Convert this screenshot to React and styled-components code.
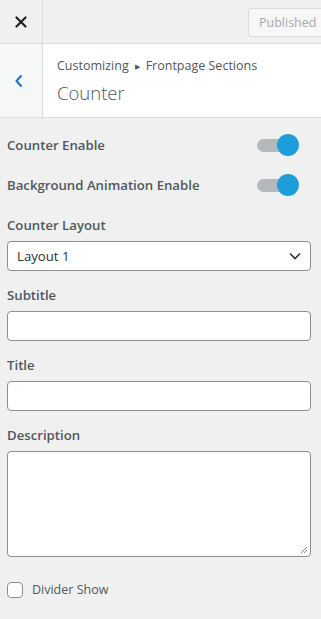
import React from 'react'
import styled, { createGlobalStyle } from 'styled-components'

const GlobalStyle = createGlobalStyle`
  html, body {
    margin: 0;
    padding: 0;
    background: #f0f0f1;
  }
  body {
    font-family: "Open Sans", "Noto Sans", sans-serif;
    color: #50575e;
  }
  * { box-sizing: border-box; }
`

const Panel = styled.div`
  width: 321px;
  height: 619px;
  background: #f0f0f1;
  overflow: hidden;
`

const TopBar = styled.div`
  display: flex;
  align-items: center;
  height: 44px;
  border-bottom: 1px solid #dcdcde;
  background: #f0f0f1;
`

const CloseButton = styled.div`
  width: 43px;
  height: 43px;
  display: flex;
  align-items: center;
  justify-content: center;
  border-right: 1px solid #dcdcde;
  svg { width: 12px; height: 12px; }
`

const PublishButton = styled.div`
  margin-left: auto;
  margin-right: -7px;
  margin-top: 1px;
  width: 80px;
  height: 29px;
  padding: 0 0 0 10px;
  display: flex;
  align-items: center;
  border: 1px solid #dcdcde;
  border-radius: 3px;
  background: #f6f7f7;
  color: #a7aaad;
  font-size: 12.5px;
`

const SectionHeader = styled.div`
  display: flex;
  height: 74px;
  background: #fff;
  border-bottom: 1px solid #dcdcde;
`

const BackButton = styled.div`
  width: 43px;
  display: flex;
  align-items: center;
  justify-content: center;
  padding-right: 4px;
  background: #f6f7f7;
  border-right: 1px solid #dcdcde;
  svg { width: 10px; height: 14px; }
`

const HeaderText = styled.div`
  padding: 12px 0 0 14px;
  display: flex;
  flex-direction: column;
`

const Crumb = styled.div`
  font-size: 12.5px;
  line-height: 20px;
  color: #50575e;
  span {
    font-size: 7px;
    margin: 0 6px;
    position: relative;
    top: -1px;
  }
`

const SectionTitle = styled.div`
  font-size: 18.5px;
  font-weight: 300;
  line-height: 28px;
  margin-top: 1px;
  color: #50575e;
`

const Body = styled.div`
  padding: 12px 10px 0 7px;
  display: flex;
  flex-direction: column;
`

const ToggleRow = styled.div`
  display: flex;
  align-items: center;
  justify-content: space-between;
  height: 40px;
  padding-right: 12px;
  margin-top: ${p => p.$first ? '-5px' : '0'};
`

const Label = styled.div`
  font-size: 13.2px;
  font-weight: 600;
  color: #50575e;
  line-height: 20px;
`

const Toggle = styled.div`
  position: relative;
  width: 42px;
  height: 22px;
  display: flex;
  align-items: center;
  &::before {
    content: '';
    width: 34px;
    height: 13px;
    border-radius: 7px;
    background: #b4b9be;
  }
  &::after {
    content: '';
    position: absolute;
    right: 0;
    top: 0;
    width: 22px;
    height: 22px;
    border-radius: 50%;
    background: #1e9fdb;
  }
`

const Field = styled.div`
  display: flex;
  flex-direction: column;
  margin-top: ${p => p.$mt || '14px'};
`

const FieldLabel = styled(Label)`
  margin-bottom: 6px;
`

const Select = styled.div`
  height: 30px;
  background: #fff;
  border: 1px solid #8c8f94;
  border-radius: 4px;
  display: flex;
  align-items: center;
  padding: 0 9px;
  font-size: 13.2px;
  color: #2c3338;
  svg { margin-left: auto; width: 12px; height: 8px; }
`

const TextInput = styled.div`
  height: 30px;
  background: #fff;
  border: 1px solid #8c8f94;
  border-radius: 4px;
`

const TextArea = styled.div`
  position: relative;
  height: 106px;
  background: #fff;
  border: 1px solid #8c8f94;
  border-radius: 4px;
  svg {
    position: absolute;
    right: 2px;
    bottom: 2px;
  }
`

const CheckRow = styled.div`
  display: flex;
  align-items: center;
  margin-top: 24px;
  gap: 9px;
`

const CheckBox = styled.div`
  width: 16px;
  height: 16px;
  border: 1px solid #8c8f94;
  border-radius: 4px;
  background: #fff;
`

const CheckLabel = styled.div`
  font-size: 12.5px;
  color: #50575e;
`

export default function App() {
  return (
    <Panel>
      <GlobalStyle />
      <TopBar>
        <CloseButton>
          <svg viewBox="0 0 12 12">
            <path d="M1.5 1.5 L10.5 10.5 M10.5 1.5 L1.5 10.5" stroke="#1d2327" strokeWidth="2.2" strokeLinecap="round" />
          </svg>
        </CloseButton>
        <PublishButton>Published</PublishButton>
      </TopBar>
      <SectionHeader>
        <BackButton>
          <svg viewBox="0 0 10 14">
            <path d="M7.5 1.5 L2.5 7 L7.5 12.5" fill="none" stroke="#2271b1" strokeWidth="2" />
          </svg>
        </BackButton>
        <HeaderText>
          <Crumb>Customizing<span>▶</span>Frontpage Sections</Crumb>
          <SectionTitle>Counter</SectionTitle>
        </HeaderText>
      </SectionHeader>
      <Body>
        <ToggleRow $first>
          <Label>Counter Enable</Label>
          <Toggle />
        </ToggleRow>
        <ToggleRow>
          <Label>Background Animation Enable</Label>
          <Toggle />
        </ToggleRow>
        <Field $mt="10px">
          <FieldLabel>Counter Layout</FieldLabel>
          <Select>
            Layout 1
            <svg viewBox="0 0 12 8">
              <path d="M1 1.5 L6 6.5 L11 1.5" fill="none" stroke="#2c3338" strokeWidth="1.6" />
            </svg>
          </Select>
        </Field>
        <Field>
          <FieldLabel>Subtitle</FieldLabel>
          <TextInput />
        </Field>
        <Field>
          <FieldLabel>Title</FieldLabel>
          <TextInput />
        </Field>
        <Field>
          <FieldLabel>Description</FieldLabel>
          <TextArea>
            <svg width="8" height="8" viewBox="0 0 8 8">
              <path d="M7 1 L1 7 M7 4 L4 7" stroke="#8c8f94" strokeWidth="1" />
            </svg>
          </TextArea>
        </Field>
        <CheckRow>
          <CheckBox />
          <CheckLabel>Divider Show</CheckLabel>
        </CheckRow>
      </Body>
    </Panel>
  )
}
